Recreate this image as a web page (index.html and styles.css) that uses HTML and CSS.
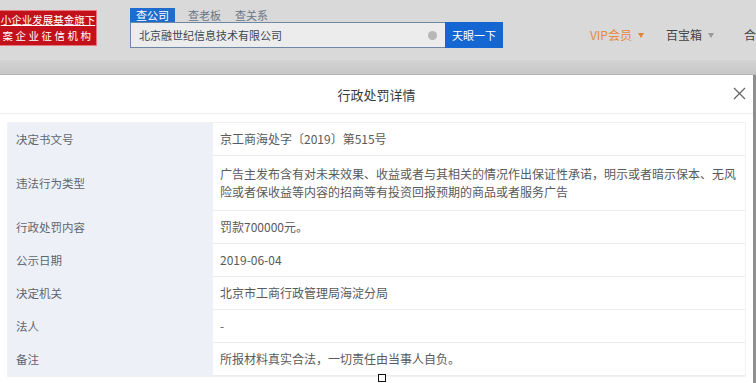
FILE: index.html
```html
<!DOCTYPE html>
<html lang="zh-CN">
<head>
    <meta charset="UTF-8">
    <meta name="viewport" content="width=device-width, initial-scale=1.0">
    <title>行政处罚详情</title>
    <link rel="stylesheet" href="styles.css">
</head>
<body>
    <div class="page">
        <div class="topbar">
            <div class="logo">
                <span>小企业发展基金旗下</span>
                <span>案企业征信机构</span>
            </div>
            <div class="search">
                <div class="tabs">
                    <span class="tab active">查公司</span>
                    <span class="tab">查老板</span>
                    <span class="tab">查关系</span>
                </div>
                <div class="search-row">
                    <div class="search-input">
                        <span>北京融世纪信息技术有限公司</span>
                        <i class="clear"></i>
                    </div>
                    <button class="search-btn">天眼一下</button>
                </div>
            </div>
            <div class="nav">
                <span class="nav-item vip">VIP会员 <i class="caret"></i></span>
                <span class="nav-item">百宝箱 <i class="caret grey"></i></span>
                <span class="nav-item last">合</span>
            </div>
        </div>
        <div class="subbar"></div>

        <div class="modal">
            <div class="modal-head">
                <span class="modal-title">行政处罚详情</span>
                <span class="modal-close">
                    <svg width="13" height="13" viewBox="0 0 13 13"><path d="M1 1 L12 12 M12 1 L1 12" stroke="#666" stroke-width="1.3" fill="none"/></svg>
                </span>
            </div>
            <div class="detail">
                <div class="label">决定书文号</div>
                <div class="value">京工商海处字〔2019〕第515号</div>

                <div class="label tall">违法行为类型</div>
                <div class="value tall">广告主发布含有对未来效果、收益或者与其相关的情况作出保证性承诺，明示或者暗示保本、无风险或者保收益等内容的招商等有投资回报预期的商品或者服务广告</div>

                <div class="label">行政处罚内容</div>
                <div class="value">罚款700000元。</div>

                <div class="label">公示日期</div>
                <div class="value">2019-06-04</div>

                <div class="label">决定机关</div>
                <div class="value">北京市工商行政管理局海淀分局</div>

                <div class="label">法人</div>
                <div class="value">-</div>

                <div class="label">备注</div>
                <div class="value">所报材料真实合法，一切责任由当事人自负。</div>
            </div>
            <span class="marker"></span>
        </div>
    </div>
</body>
</html>
```

FILE: styles.css
```css
body {
    margin: 0;
    font-family: "Noto Sans CJK SC", "Liberation Sans", sans-serif;
    background-color: #8f8f8f;
    overflow: hidden;
}
.page {
    width: 756px;
    height: 383px;
    display: flex;
    flex-direction: column;
}
.topbar {
    height: 60px;
    background: #d9d9d9;
    display: flex;
    align-items: flex-start;
}
.logo {
    margin-top: 11px;
    width: 97px;
    height: 34px;
    background: #c3111b;
    box-shadow: 0 0 0 1px #e8757a;
    color: #fff;
    font-size: 10.5px;
    line-height: 16px;
    display: flex;
    flex-direction: column;
    justify-content: center;
    align-items: center;
    overflow: hidden;
    white-space: nowrap;
}
.logo span:first-child {
    text-decoration: underline;
}
.logo span:last-child {
    letter-spacing: 2.5px;
}
.search {
    margin-left: 34px;
    margin-top: 8px;
}
.tabs {
    display: flex;
    height: 14px;
}
.tab {
    font-size: 11px;
    line-height: 14px;
    color: #6a7585;
    padding: 0 5px;
    margin-right: 4px;
    white-space: nowrap;
}
.tab.active {
    background: #1f6ccc;
    color: #fff;
    padding: 0 6px;
    margin-right: 8px;
}
.search-row {
    display: flex;
    height: 26px;
}
.search-input {
    width: 298px;
    border: 1px solid #6d87a6;
    border-right: none;
    background: #ececec;
    display: flex;
    align-items: center;
    justify-content: space-between;
    padding: 0 8px;
    font-size: 11px;
    color: #3c4654;
}
.clear {
    width: 9px;
    height: 9px;
    border-radius: 50%;
    background: #b7b7b7;
}
.search-btn {
    width: 58px;
    border: none;
    background: #1466d2;
    color: #fff;
    font-family: inherit;
    font-size: 11px;
    padding: 0;
}
.nav {
    margin-left: 87px;
    margin-top: 27px;
    display: flex;
    font-size: 12px;
    line-height: 16px;
    color: #444;
}
.nav-item {
    margin-right: 22px;
    display: flex;
    align-items: center;
    white-space: nowrap;
}
.nav-item.vip {
    color: #e28a3e;
}
.nav-item.last {
    margin-left: 8px;
    margin-right: 0;
}
.caret {
    margin-left: 6px;
    width: 0;
    height: 0;
    border-left: 3.5px solid transparent;
    border-right: 3.5px solid transparent;
    border-top: 5px solid #e0843a;
}
.caret.grey {
    border-top-color: #999;
}
.subbar {
    height: 14px;
    background: linear-gradient(#d3d3d3, #c7c7c7);
    border-bottom: 1px solid #b5b5b5;
}
.modal {
    flex: 1;
    width: 753px;
    background: #fff;
    position: relative;
}
.modal-head {
    height: 38px;
    border-bottom: 1px solid #eee;
    display: flex;
    align-items: center;
    justify-content: center;
    position: relative;
}
.modal-title {
    font-size: 13px;
    color: #3a3a3a;
}
.modal-close {
    position: absolute;
    right: 7px;
    top: 12px;
    line-height: 0;
}
.detail {
    margin: 9px 8px 0 8px;
    display: grid;
    grid-template-columns: 205px 1fr;
    font-size: 12px;
    line-height: 18px;
    color: #5a5a5a;
    box-shadow: 0 0 0 1px #f2f2f2;
}
.label {
    background: #edf1f7;
    padding: 7px 8px;
    border-bottom: 1px solid #edf1f7;
    color: #5f6670;
    font-size: 11.5px;
    display: flex;
    align-items: center;
}
.value {
    padding: 7px 8px 7px 7px;
    border-bottom: 1px solid #ececec;
}
.value.tall,
.label.tall {
    padding-top: 9px;
    padding-bottom: 9px;
}
.marker {
    position: absolute;
    left: 378px;
    top: 299px;
    width: 6px;
    height: 6px;
    border: 1.5px solid #111;
    background: #fff;
}
```
